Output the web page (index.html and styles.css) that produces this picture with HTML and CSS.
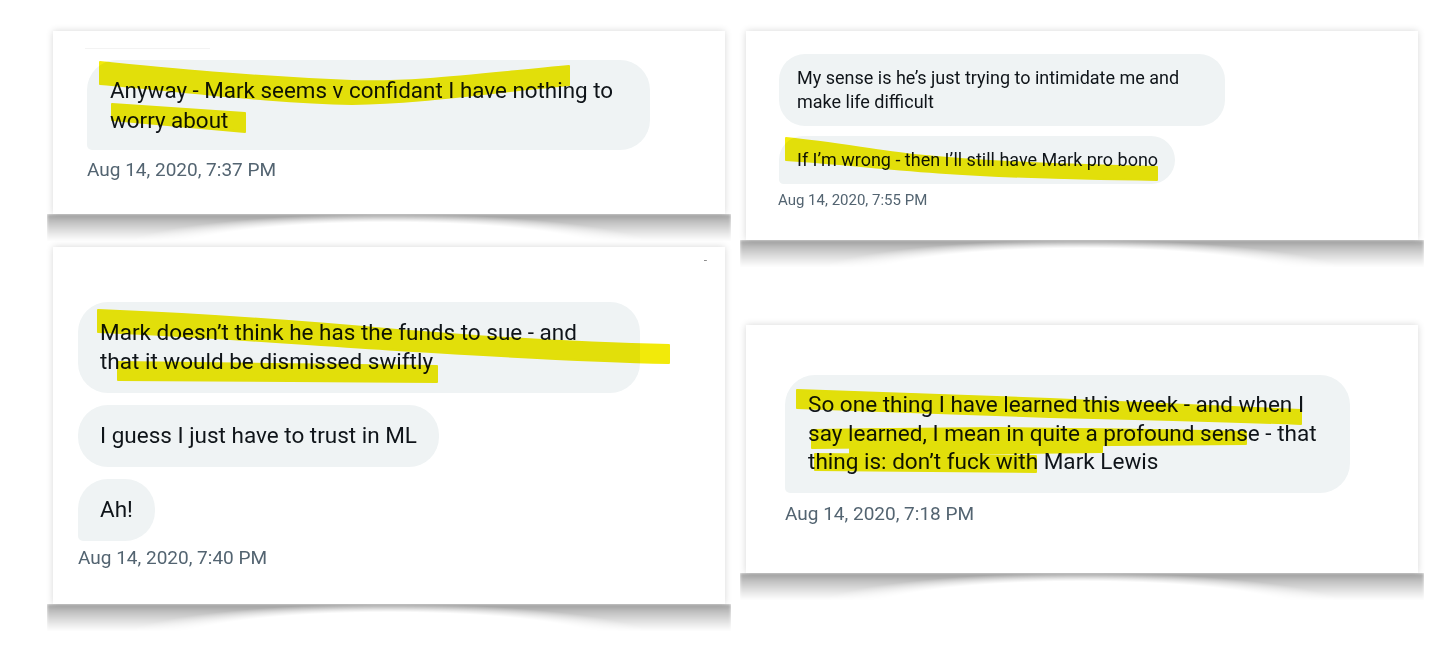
FILE: index.html
```html
<!DOCTYPE html>
<html lang="en">
<head>
    <meta charset="UTF-8">
    <meta name="viewport" content="width=device-width, initial-scale=1.0">
    <title>Messages with Mark</title>
    <link rel="stylesheet" href="styles.css">
</head>
<body>

    <div class="page">

        <div class="column column-left">

            <!-- Card 1 -->
            <section class="card card-one">
                <div class="faint-rule"></div>
                <div class="thread">
                    <div class="bubble bubble-wide bubble-last">Anyway - Mark seems v confidant I have nothing to<br>worry about</div>
                </div>
                <div class="stamp">Aug 14, 2020, 7:37 PM</div>
                <svg class="marker" viewBox="0 0 672 183" preserveAspectRatio="none">
                    <path d="M47 31 C 120 38, 200 46, 299 50 C 360 52, 420 44, 516 35 L 516 54 C 430 62, 370 72, 299 73 C 220 72, 130 60, 47 53 Z"/>
                    <path d="M59 73 L 192 82 L 192 101 L 59 89 Z"/>
                </svg>
            </section>

            <!-- Card 3 -->
            <section class="card card-three">
                <span class="corner-dash">-</span>
                <div class="thread">
                    <div class="bubble bubble-wide">Mark doesn’t think he has the funds to sue - and<br>that it would be dismissed swiftly</div>
                    <div class="bubble">I guess I just have to trust in ML</div>
                    <div class="bubble bubble-last">Ah!</div>
                </div>
                <div class="stamp">Aug 14, 2020, 7:40 PM</div>
                <svg class="marker" viewBox="0 0 672 357" preserveAspectRatio="none">
                    <path d="M45 63 C 120 66, 200 70, 344 83 C 430 90, 520 96, 616 98 L 616 116 C 520 114, 430 108, 344 103 C 220 95, 130 88, 45 85 Z"/>
                    <path d="M65 115 L 384 119 L 384 135 L 65 133 Z"/>
                </svg>
            </section>

        </div>

        <div class="column column-right">

            <!-- Card 2 -->
            <section class="card card-two">
                <div class="thread">
                    <div class="bubble bubble-wide">My sense is he’s just trying to intimidate me and<br>make life difficult</div>
                    <div class="bubble bubble-last">If I’m wrong - then I’ll still have Mark pro bono</div>
                </div>
                <div class="stamp">Aug 14, 2020, 7:55 PM</div>
                <svg class="marker" viewBox="0 0 672 209" preserveAspectRatio="none">
                    <path d="M40 107 C 90 112, 130 120, 168 124 C 250 132, 330 134, 411 136 L 411 149 C 330 148, 260 146, 200 142 C 140 138, 90 132, 40 129 Z"/>
                </svg>
            </section>

            <!-- Card 4 -->
            <section class="card card-four">
                <div class="thread">
                    <div class="bubble bubble-wide bubble-last">So one thing I have learned this week - and when I<br>say learned, I mean in quite a profound sense - that<br>thing is: don’t fuck with Mark Lewis</div>
                </div>
                <div class="stamp">Aug 14, 2020, 7:18 PM</div>
                <svg class="marker" viewBox="0 0 672 248" preserveAspectRatio="none">
                    <path d="M51 65 C 150 68, 230 71, 304 74 C 400 78, 480 81, 555 85 L 555 99 C 480 96, 400 94, 304 92 C 220 89, 140 86, 51 83 Z"/>
                    <path d="M66 105 C 130 104, 200 103, 254 103 C 350 104, 430 105, 500 107 L 500 119 C 430 119, 350 120, 254 121 C 190 122, 120 123, 66 123 Z"/>
                    <path d="M104 121 L 356 118 L 356 127 L 104 130 Z"/>
                    <path d="M69 129 L 290 131 L 290 147 L 69 145 Z"/>
                </svg>
            </section>

        </div>

    </div>

</body>
</html>
```

FILE: styles.css
```css
body {
    font-family: Roboto, 'Liberation Sans', sans-serif;
    background-color: #ffffff;
    margin: 0;
    color: #0f1419;
}

.page {
    display: grid;
    grid-template-columns: 672px 672px;
    column-gap: 21px;
    align-items: start;
    padding: 31px 0 45px 53px;
}

.column {
    display: flex;
    flex-direction: column;
}

.column-left {
    gap: 33px;
}

.column-right {
    gap: 85px;
}

/* paper card with lifted-corner shadow */
.card {
    position: relative;
    background-color: #ffffff;
    box-sizing: border-box;
    box-shadow: 0 0 7px rgba(0, 0, 0, 0.16);
}

.card::after {
    content: "";
    position: absolute;
    top: 100%;
    left: -6px;
    right: -6px;
    height: 27px;
    background: linear-gradient(to bottom, rgba(0, 0, 0, 0.36), rgba(0, 0, 0, 0.15) 55%, rgba(0, 0, 0, 0));
    -webkit-mask-image: radial-gradient(ellipse 40% 140% at 50% 140%, transparent 78%, #000 100%);
    mask-image: radial-gradient(ellipse 40% 140% at 50% 140%, transparent 78%, #000 100%);
    filter: blur(1.5px);
}

.card-one {
    height: 183px;
    padding: 17px 0 0 34px;
}

.card-two {
    height: 209px;
    padding: 23px 0 0 33px;
}

.card-three {
    height: 357px;
    padding: 55px 0 0 25px;
}

.card-four {
    height: 248px;
    padding: 50px 0 0 39px;
}

.faint-rule {
    width: 125px;
    height: 1px;
    margin: 0 0 11px -2px;
    background-color: #f3f3f3;
}

.corner-dash {
    position: absolute;
    top: 6px;
    right: 18px;
    font-size: 12px;
    color: #8a8a8a;
}

.thread {
    display: flex;
    flex-direction: column;
    align-items: flex-start;
    gap: 12px;
}

.bubble {
    background-color: #eff3f4;
    border-radius: 30px;
    font-size: 22.5px;
    line-height: 29px;
    padding: 16px 22px 17px 22px;
    white-space: nowrap;
    box-sizing: border-box;
}

.bubble-last {
    border-bottom-left-radius: 5px;
}

.card-one .bubble {
    width: 563px;
    font-size: 22.4px;
    line-height: 30px;
    padding: 15px 23px;
}

.card-three .bubble-wide {
    width: 562px;
}

.card-four .bubble {
    width: 565px;
    font-size: 22.55px;
    line-height: 28.5px;
    padding: 16px 23px;
}

.card-two .thread {
    gap: 10px;
}

.card-two .bubble {
    font-size: 18px;
    line-height: 24px;
    padding: 12px 17px 12px 18px;
    border-radius: 26px;
}

.card-two .bubble-last {
    border-bottom-left-radius: 5px;
}

.card-two .bubble-wide {
    width: 446px;
}

.stamp {
    font-size: 19px;
    line-height: 24px;
    color: #536471;
    margin-top: 8px;
}

.card-three .stamp {
    margin-top: 5px;
}

.card-four .stamp {
    margin-top: 9px;
    line-height: 24px;
}

.card-two .stamp {
    font-size: 15px;
    line-height: 20px;
    margin-top: 6px;
    margin-left: -1px;
}

/* highlighter strokes laid over the bubbles */
.marker {
    position: absolute;
    top: 0;
    left: 0;
    width: 100%;
    height: 100%;
    pointer-events: none;
    mix-blend-mode: multiply;
}

.marker path {
    fill: #f2ea0a;
    stroke: #f2ea0a;
    stroke-width: 2;
    stroke-linejoin: round;
}
```
